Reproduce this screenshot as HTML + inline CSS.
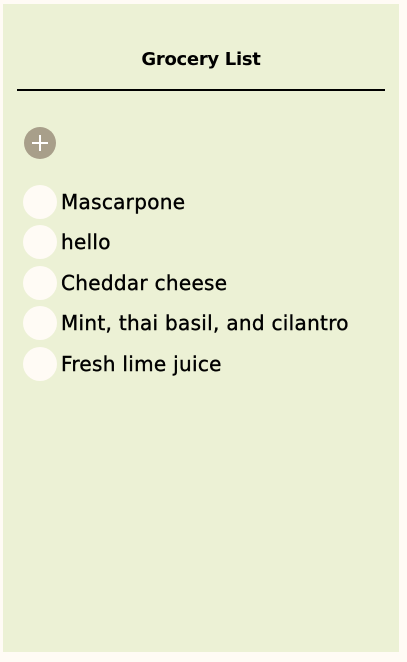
<!DOCTYPE html>
<html><head><style>
html,body{margin:0;padding:0;background:#fffbf5;width:407px;height:662px;overflow:hidden}
.panel{position:absolute;left:3px;top:4px;width:396px;height:648px;background:#ecf1d5}
h1{position:absolute;left:0;width:396px;top:45px;margin:0;text-align:center;font:bold 18px "DejaVu Sans",sans-serif;color:#000;letter-spacing:-0.3px}
.line{position:absolute;left:14px;top:85px;width:368px;height:2px;background:#000}
.add{position:absolute;left:21px;top:123px;width:32px;height:32px;border-radius:50%;background:#a89f8a}
.add:before{content:"";position:absolute;left:8px;top:15px;width:16px;height:2px;background:#fff}
.add:after{content:"";position:absolute;left:15px;top:8px;width:2px;height:16px;background:#fff}
.item{position:absolute;left:20px;height:34px;font:20px "DejaVu Sans",sans-serif;color:#000;line-height:35px;-webkit-text-stroke:0.4px #000}
.item i{position:absolute;left:0;top:0;width:34px;height:34px;border-radius:50%;background:#fffbf5}
.item span{position:absolute;left:38px;white-space:nowrap;letter-spacing:0.3px}
</style></head><body>
<div class="panel">
<h1>Grocery List</h1>
<div class="line"></div>
<div class="add"></div>
<div class="item" style="top:181px"><i></i><span>Mascarpone</span></div>
<div class="item" style="top:221px"><i></i><span>hello</span></div>
<div class="item" style="top:262px"><i></i><span>Cheddar cheese</span></div>
<div class="item" style="top:302px"><i></i><span>Mint, thai basil, and cilantro</span></div>
<div class="item" style="top:343px"><i></i><span>Fresh lime juice</span></div>
</div>
</body></html>
